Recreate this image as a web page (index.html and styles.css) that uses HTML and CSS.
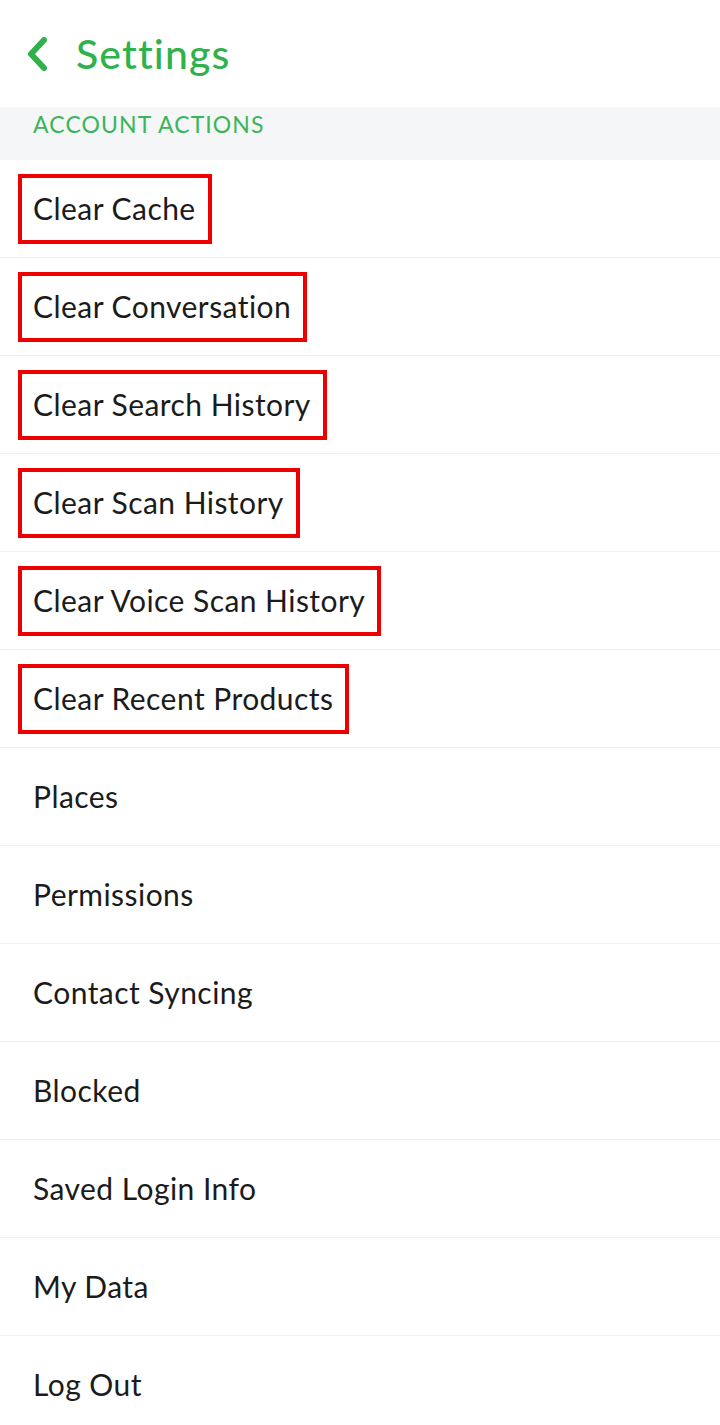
FILE: index.html
```html
<!DOCTYPE html>
<html lang="en">
<head>
<meta charset="utf-8">
<title>Settings</title>
<link rel="stylesheet" href="styles.css">
</head>
<body>
<header class="topbar">
  <svg class="back" width="24" height="36" viewBox="0 0 24 36" aria-hidden="true">
    <path d="M19 4 L6 18 L19 32" fill="none" stroke="#2fb24c" stroke-width="6" stroke-linecap="round" stroke-linejoin="round"/>
  </svg>
  <h1 class="title">Settings</h1>
</header>
<div class="section">ACCOUNT ACTIONS</div>
<ul class="list">
  <li class="row"><span class="label hl">Clear Cache</span></li>
  <li class="row"><span class="label hl">Clear Conversation</span></li>
  <li class="row"><span class="label hl">Clear Search History</span></li>
  <li class="row"><span class="label hl">Clear Scan History</span></li>
  <li class="row"><span class="label hl">Clear Voice Scan History</span></li>
  <li class="row"><span class="label hl">Clear Recent Products</span></li>
  <li class="row"><span class="label">Places</span></li>
  <li class="row"><span class="label">Permissions</span></li>
  <li class="row"><span class="label">Contact Syncing</span></li>
  <li class="row"><span class="label">Blocked</span></li>
  <li class="row"><span class="label">Saved Login Info</span></li>
  <li class="row"><span class="label">My Data</span></li>
  <li class="row"><span class="label">Log Out</span></li>
</ul>
</body>
</html>
```
FILE: styles.css
```css
* { box-sizing: border-box; }
html, body {
  margin: 0;
  padding: 0;
  background: #ffffff;
}
body {
  font-family: "Lato", "Open Sans", sans-serif;
  color: #1b1b1b;
}
.topbar {
  height: 107px;
  display: flex;
  align-items: center;
  padding-left: 25px;
  gap: 27px;
}
.back {
  display: block;
  flex: none;
}
.title {
  margin: 0;
  font-size: 41px;
  font-weight: 500;
  color: #2fb24c;
  letter-spacing: 1.1px;
}
.section {
  height: 53px;
  background: #f5f6f8;
  color: #3bb55a;
  font-size: 23px;
  padding: 3px 0 0 33px;
  letter-spacing: 1.1px;
}
.list {
  list-style: none;
  margin: 0;
  padding: 0;
}
.row {
  height: 98px;
  display: flex;
  align-items: center;
  padding-left: 18px;
  border-bottom: 1px solid #f0f0f2;
}
.label {
  display: inline-flex;
  align-items: center;
  height: 70px;
  padding: 0 12px 2px 11px;
  border: 4px solid transparent;
  font-size: 30px;
  letter-spacing: 0.45px;
}
.label.hl {
  border-color: #ee0000;
}
```
